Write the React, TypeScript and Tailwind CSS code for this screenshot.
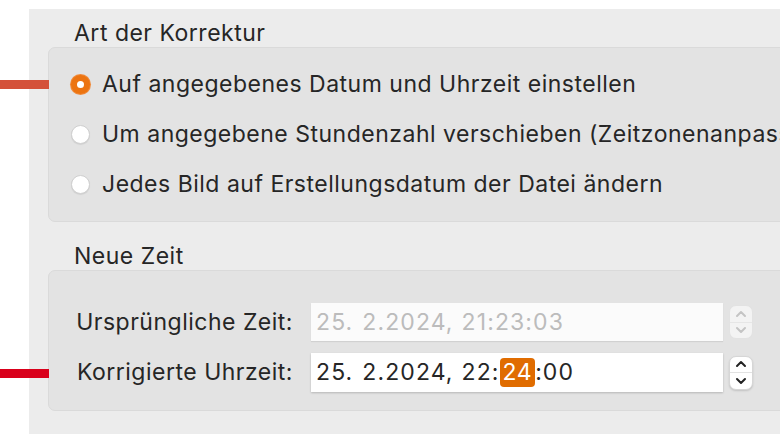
import React from "react";

const font = { fontFamily: "Inter, 'Noto Sans', sans-serif" };

function Radio({ checked }: { checked?: boolean }) {
  if (checked) {
    return (
      <span className="flex h-[19px] w-[19px] shrink-0 items-center justify-center rounded-full bg-[#ec7411] shadow-[0_0_0_1px_#f08a3a]">
        <span className="h-[7px] w-[7px] rounded-full bg-white" />
      </span>
    );
  }
  return (
    <span className="h-[19px] w-[19px] shrink-0 rounded-full border border-[#cfcfcf] bg-white shadow-[0_1px_1px_rgba(0,0,0,0.08)]" />
  );
}

function Stepper({ disabled }: { disabled?: boolean }) {
  const c = disabled ? "#c4c4c4" : "#222";
  return (
    <div
      className={`flex h-[34px] w-[24px] flex-col items-center rounded-[7px] border ${
        disabled ? "border-[#e2e2e2] bg-[#f3f3f3]" : "border-[#d6d6d6] bg-white shadow-[0_1px_2px_rgba(0,0,0,0.15)]"
      }`}
    >
      <div className="flex flex-1 items-center justify-center">
        <svg width="12" height="8" viewBox="0 0 12 8">
          <path d="M2 6 L6 2 L10 6" fill="none" stroke={c} strokeWidth="2" strokeLinecap="round" strokeLinejoin="round" />
        </svg>
      </div>
      <div className={`h-px w-full ${disabled ? "bg-[#e6e6e6]" : "bg-[#e2e2e2]"}`} />
      <div className="flex flex-1 items-center justify-center">
        <svg width="12" height="8" viewBox="0 0 12 8">
          <path d="M2 2 L6 6 L10 2" fill="none" stroke={c} strokeWidth="2" strokeLinecap="round" strokeLinejoin="round" />
        </svg>
      </div>
    </div>
  );
}

export default function App() {
  return (
    <div className="relative h-[445px] w-[780px] overflow-hidden bg-white text-[#262626]" style={font}>
      {/* annotation lines */}
      <div className="absolute left-0 top-[80px] h-[9px] w-[49px] bg-[#d4513a]" />
      <div className="absolute left-0 top-[369px] h-[9px] w-[49px] bg-[#d9001b]" />

      <div className="ml-[29px] mt-[9px] flex h-[425px] w-[800px] flex-col bg-[#ececec] pl-[19px] pt-[10px] text-[23px] tracking-[0.5px]">
        <div className="flex h-[28px] items-center pl-[26px]">Art der Korrektur</div>
        <div className="flex h-[175px] flex-col justify-center rounded-[7px] border border-[#dadada] bg-[#e3e3e3] pl-[22px]">
          <div className="flex h-[50px] items-center gap-[12px]">
            <Radio checked />
            <span>Auf angegebenes Datum und Uhrzeit einstellen</span>
          </div>
          <div className="flex h-[50px] items-center gap-[12px]">
            <Radio />
            <span className="whitespace-nowrap">Um angegebene Stundenzahl verschieben (Zeitzonenanpassung)</span>
          </div>
          <div className="flex h-[50px] items-center gap-[12px]">
            <Radio />
            <span>Jedes Bild auf Erstellungsdatum der Datei ändern</span>
          </div>
        </div>

        <div className="mt-[20px] flex h-[28px] items-center pl-[26px]">Neue Zeit</div>
        <div className="flex h-[141px] flex-col justify-center gap-[12px] rounded-[7px] border border-[#dadada] bg-[#e3e3e3] pt-[14px]">
          <div className="flex items-center">
            <div className="w-[262px] pr-[18px] text-right">Ursprüngliche Zeit:</div>
            <div className="flex h-[38px] w-[412px] items-center bg-[#fbfbfb] pl-[5px] tracking-[1.1px] text-[#bcbcbc] shadow-[0_1px_1px_rgba(0,0,0,0.08)]">
              <span>25.</span>
              <span className="ml-[9px]">2.2024,</span>
              <span className="ml-[8px]">21:23:03</span>
            </div>
            <div className="ml-[6px]">
              <Stepper disabled />
            </div>
          </div>
          <div className="flex items-center">
            <div className="w-[262px] pr-[18px] text-right">Korrigierte Uhrzeit:</div>
            <div className="flex h-[39px] w-[412px] items-center bg-white pl-[5px] tracking-[1.1px] text-[#262626] shadow-[0_1px_2px_rgba(0,0,0,0.2)]">
              <span>25.</span>
              <span className="ml-[9px]">2.2024,</span>
              <span className="ml-[8px]">22:</span>
              <span className="flex h-[29px] items-center rounded-[4px] bg-[#e06c00] px-[3px] tracking-[0.5px] text-white">24</span>
              <span>:00</span>
            </div>
            <div className="ml-[6px]">
              <Stepper />
            </div>
          </div>
        </div>
      </div>
    </div>
  );
}
